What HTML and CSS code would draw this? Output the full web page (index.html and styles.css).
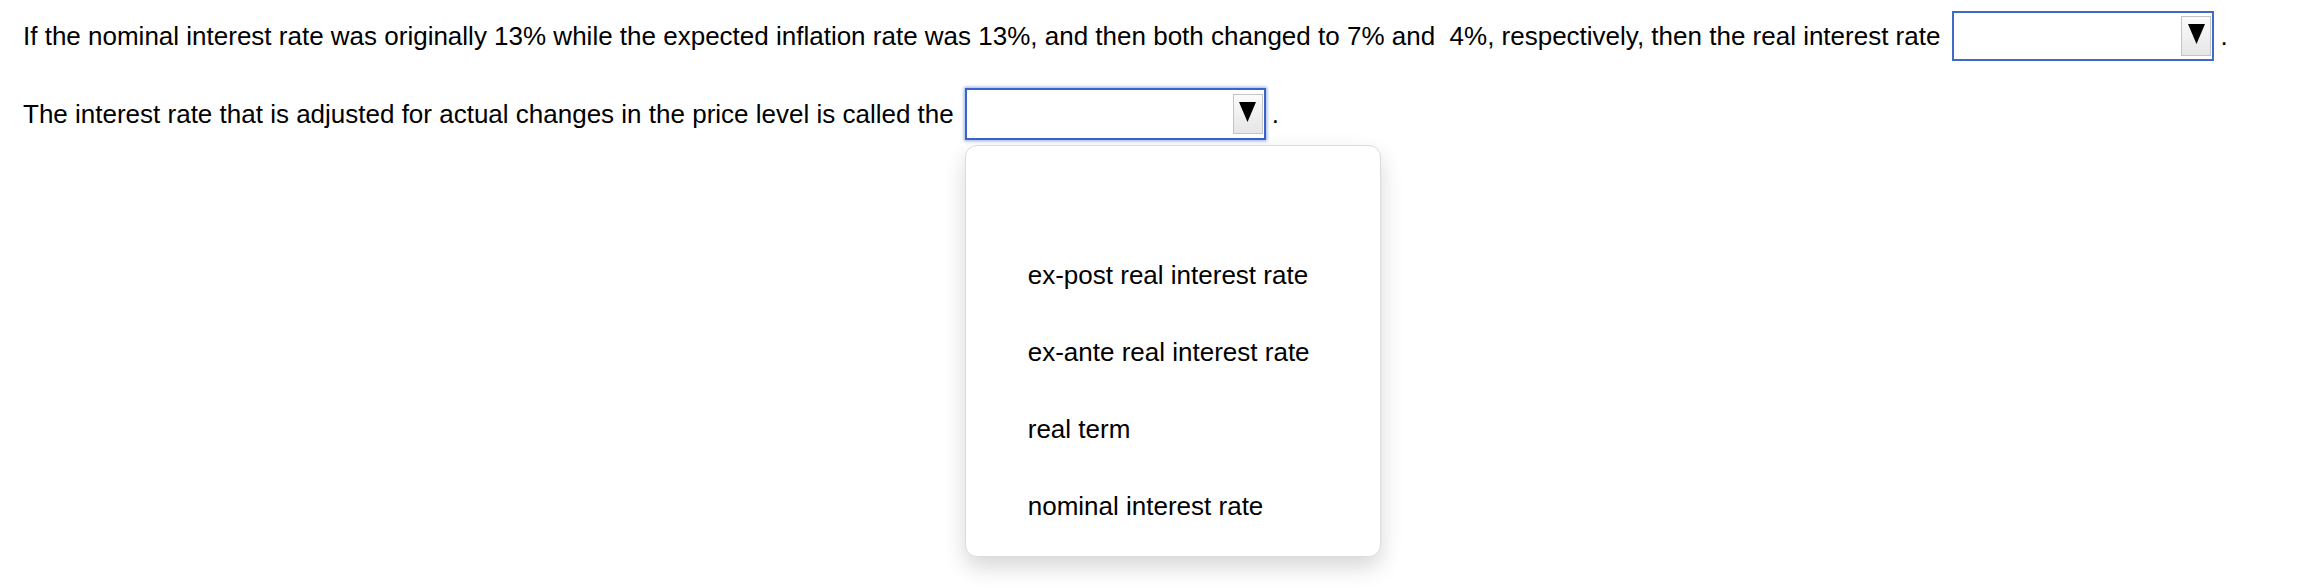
FILE: index.html
```html
<!DOCTYPE html>
<html>
<head>
<meta charset="utf-8">
<link rel="stylesheet" href="styles.css">
</head>
<body>
<div class="question">
  <div class="row row-one">
    <span class="text">If the nominal interest rate was originally 13% while the expected inflation rate was 13%, and then both changed to 7% and&nbsp; 4%, respectively, then the real interest rate</span>
    <span class="select select-one">
      <span class="btn"><svg class="tri" viewBox="0 0 17 20" width="17" height="20"><polygon points="0,0 17,0 8.5,20" fill="#000"/></svg></span>
    </span>
    <span class="dot">.</span>
  </div>
  <div class="row row-two">
    <span class="text">The interest rate that is adjusted for actual changes in the price level is called the</span>
    <span class="select select-two focused">
      <span class="btn"><svg class="tri" viewBox="0 0 17 20" width="17" height="20"><polygon points="0,0 17,0 8.5,20" fill="#000"/></svg></span>
      <span class="menu">
        <span class="option">&nbsp;</span>
        <span class="option">ex-post real interest rate</span>
        <span class="option">ex-ante real interest rate</span>
        <span class="option">real term</span>
        <span class="option">nominal interest rate</span>
      </span>
    </span>
    <span class="dot">.</span>
  </div>
</div>
</body>
</html>
```

FILE: styles.css
```css
html, body {
  margin: 0;
  padding: 0;
  background: #ffffff;
}

html {
  height: 100%;
}

body {
  min-height: 588px;
  font-family: "Liberation Sans", Arial, sans-serif;
  font-size: 26px;
  color: #000000;
}

.question {
  position: relative;
  min-height: 577px;
  padding: 11px 0 0 23px;
}

.row {
  display: flex;
  align-items: center;
  white-space: nowrap;
}

.row-one {
  height: 50px;
}

.row-two {
  height: 52px;
  margin-top: 27px;
}

.text {
  line-height: normal;
}

.select {
  position: relative;
  box-sizing: border-box;
  display: flex;
  align-items: center;
  justify-content: flex-end;
  background: #ffffff;
  border: 2px solid #4169c6;
}

.select-one {
  width: 262px;
  height: 50px;
  margin-left: 12px;
  padding-right: 1px;
}

.select-two {
  width: 301px;
  height: 52px;
  margin-left: 11px;
  padding-right: 1px;
  border-color: #3b63c8;
  box-shadow: 0 0 3px 1px rgba(70, 110, 210, 0.55);
}

.btn {
  box-sizing: border-box;
  width: 30px;
  height: 40px;
  display: flex;
  align-items: flex-start;
  justify-content: center;
  padding-top: 7px;
  border: 1px solid #c4c4c4;
  background: linear-gradient(#fbfbfb, #e6e6e6);
}

.tri {
  display: block;
}

.dot {
  margin-left: 6px;
}

.menu {
  position: absolute;
  top: 55px;
  left: -2px;
  display: block;
  box-sizing: border-box;
  width: 416px;
  height: 412px;
  padding: 14px 0 11px;
  background: #ffffff;
  border: 1px solid #dcdcdc;
  border-radius: 12px;
  box-shadow: 0 10px 22px rgba(0, 0, 0, 0.16);
  z-index: 5;
}

.option {
  display: block;
  box-sizing: border-box;
  height: 77px;
  padding: 25px 62px;
  line-height: 27px;
}
```
